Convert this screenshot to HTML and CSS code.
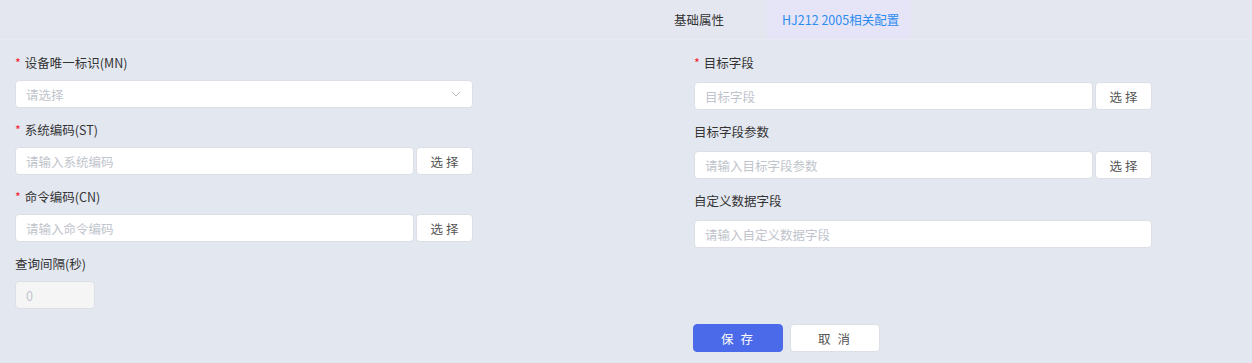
FILE: index.html
```html
<!DOCTYPE html>
<html lang="zh-CN">
<head>
<meta charset="UTF-8">
<meta name="viewport" content="width=device-width, initial-scale=1.0">
<title>HJ212 2005相关配置</title>
<link rel="stylesheet" href="styles.css">
</head>
<body>
  <div class="tabs">
    <div class="tab">基础属性</div>
    <div class="tab active">HJ212 2005相关配置</div>
  </div>

  <div class="form">
    <div class="col col-left">
      <div class="field">
        <label class="req">设备唯一标识(MN)</label>
        <div class="select">
          <span class="placeholder">请选择</span>
          <svg class="arrow" width="10" height="6" viewBox="0 0 10 6"><path d="M1 1l4 4 4-4" fill="none" stroke="#c0c4cc" stroke-width="1"/></svg>
        </div>
      </div>
      <div class="field">
        <label class="req">系统编码(ST)</label>
        <div class="row">
          <input type="text" placeholder="请输入系统编码">
          <button class="pick">选 择</button>
        </div>
      </div>
      <div class="field">
        <label class="req">命令编码(CN)</label>
        <div class="row">
          <input type="text" placeholder="请输入命令编码">
          <button class="pick">选 择</button>
        </div>
      </div>
      <div class="field">
        <label>查询间隔(秒)</label>
        <input type="text" class="small" value="0" disabled>
      </div>
    </div>

    <div class="col col-right">
      <div class="field">
        <label class="req">目标字段</label>
        <div class="row">
          <input type="text" placeholder="目标字段">
          <button class="pick">选 择</button>
        </div>
      </div>
      <div class="field">
        <label>目标字段参数</label>
        <div class="row">
          <input type="text" placeholder="请输入目标字段参数">
          <button class="pick">选 择</button>
        </div>
      </div>
      <div class="field">
        <label>自定义数据字段</label>
        <input type="text" placeholder="请输入自定义数据字段">
      </div>
      <div class="actions">
        <button class="save">保 存</button>
        <button class="cancel">取 消</button>
      </div>
    </div>
  </div>
</body>
</html>
```

FILE: styles.css
```css
body {
  margin: 0;
  background: #e3e7f0;
  font-family: "Noto Sans CJK SC", "Noto Sans", sans-serif;
  font-size: 12.5px;
  color: #333;
}
.tabs {
  height: 39px;
  display: flex;
  padding-left: 659px;
  border-bottom: 1px solid #e7eaf2;
  background: #e4e7f0;
}
.tab {
  padding: 0 15px;
  line-height: 39px;
  color: #333;
  margin-right: 28px;
}
.tab.active {
  background: #e6e5f7;
  color: #2d8cf0;
  padding: 0 12px 0 15px;
}
.form {
  display: flex;
  padding-top: 13px;
}
.col-left {
  width: 458px;
  margin-left: 15px;
}
.col-right {
  width: 458px;
  margin-left: 221px;
}
.field {
  margin-bottom: 12px;
}
label {
  display: block;
  line-height: 20px;
  margin-bottom: 7px;
  color: #333;
}
.col-right label {
  margin-bottom: 9px;
}
label.req::before {
  content: "*";
  color: #f5222d;
  margin-right: 4px;
}
input, .select {
  box-sizing: border-box;
  width: 100%;
  height: 28px;
  padding: 0 10px;
  border: 1px solid #dcdfe6;
  border-radius: 4px;
  background: #fff;
  font-family: inherit;
  font-size: 12.5px;
  color: #606266;
  outline: none;
}
input::placeholder, .placeholder {
  color: #c0c4cc;
}
.select {
  display: flex;
  align-items: center;
  justify-content: space-between;
}
.arrow {
  margin-right: 1px;
}
.row {
  display: flex;
  gap: 2px;
}
.row input {
  flex: 1;
}
button {
  font-family: inherit;
  font-size: 12.5px;
  cursor: pointer;
  border-radius: 4px;
}
.pick {
  width: 57px;
  height: 28px;
  background: #fff;
  border: 1px solid #dcdfe6;
  color: #555;
}
input.small {
  width: 80px;
  background: #f5f5f5;
  color: #c0c4cc;
}
.actions {
  display: flex;
  gap: 7px;
  margin-top: 76px;
  margin-left: -1px;
}
.save, .cancel {
  width: 90px;
  height: 28px;
  border: 1px solid #dcdfe6;
  letter-spacing: 2px;
}
.save {
  background: #4b6ae9;
  border-color: #4b6ae9;
  color: #fff;
}
.cancel {
  background: #fff;
  color: #555;
}
```
